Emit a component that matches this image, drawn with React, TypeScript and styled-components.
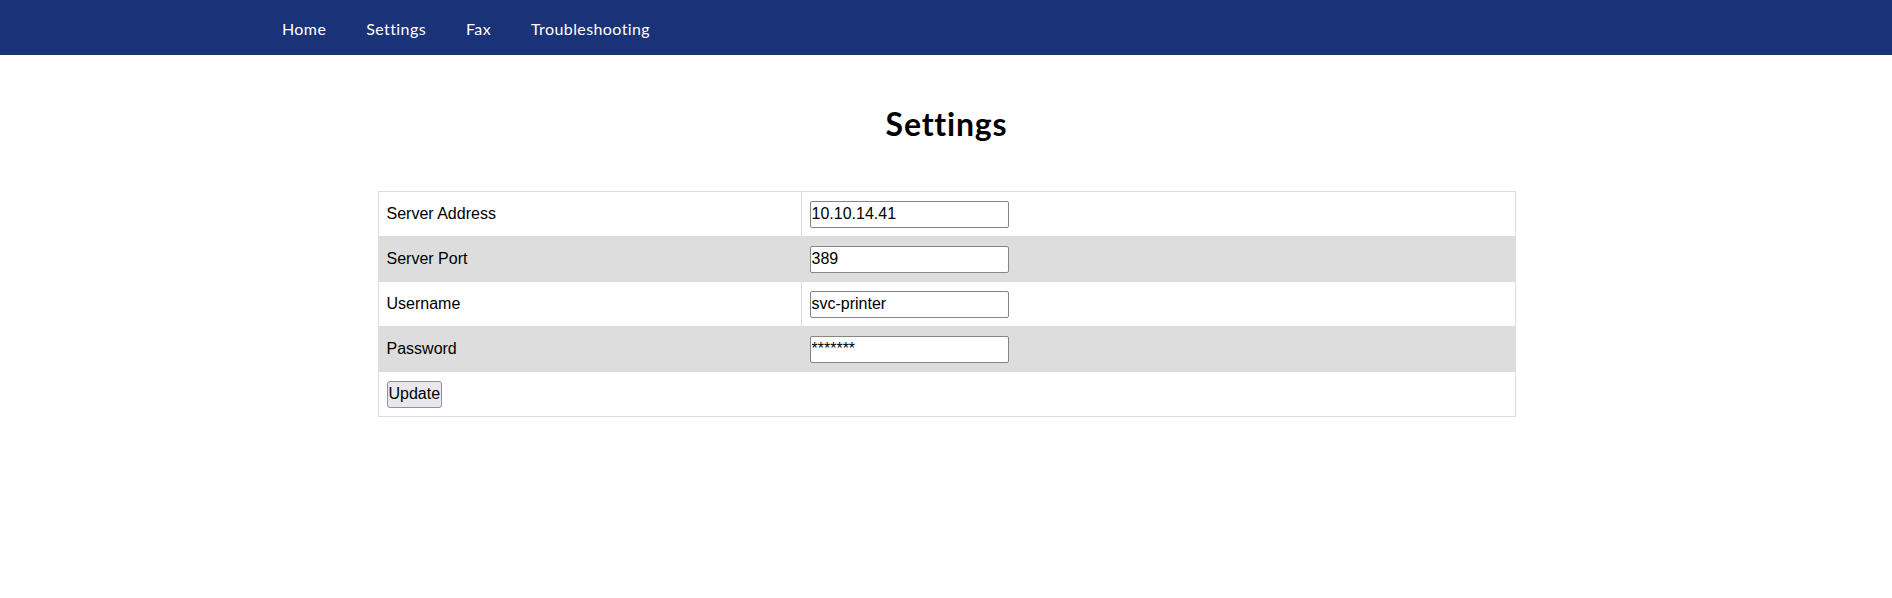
import React from "react";
import styled, { createGlobalStyle } from "styled-components";

const GlobalStyle = createGlobalStyle`
  html, body { margin: 0; padding: 0; background: #ffffff; }
  body { font-family: "Liberation Sans", Arial, sans-serif; }
`;

const NavBar = styled.nav`
  height: 55px;
  background: #193278;
  display: flex;
  align-items: center;
  padding-left: 262px;
`;

const NavLink = styled.a`
  font-family: "Lato", "Noto Sans", sans-serif;
  font-size: 16px;
  letter-spacing: 0.4px;
  color: #ffffff;
  text-decoration: none;
  padding: 0 20px;
  line-height: 20px;
  margin-top: 2px;
`;

const Main = styled.main`
  display: flex;
  flex-direction: column;
  align-items: center;
  padding-left: 1px;
`;

const Title = styled.h1`
  font-family: "Lato", "Noto Sans", sans-serif;
  font-weight: 700;
  font-size: 32px;
  letter-spacing: 0.8px;
  line-height: 40px;
  color: #000;
  margin: 49px 0 47px;
`;

const Table = styled.table`
  width: 1138px;
  border-collapse: collapse;
  border: 1px solid #dddddd;
  font-size: 16px;
  color: #000;
`;

const Row = styled.tr<{ $shaded?: boolean }>`
  background: ${(p) => (p.$shaded ? "#dddddd" : "#ffffff")};
`;

const Cell = styled.td<{ $label?: boolean }>`
  border: 1px solid #dddddd;
  padding: 0 8px;
  height: 44px;
  vertical-align: middle;
  width: ${(p) => (p.$label ? "406px" : "auto")};
`;

const Input = styled.input`
  box-sizing: border-box;
  width: 199px;
  height: 27px;
  font-family: "Liberation Sans", Arial, sans-serif;
  font-size: 16px;
  color: #000;
  padding: 0 1px;
  border: 1px solid #858585;
  border-radius: 2px;
  background: #fff;
  outline: none;
  display: block;
`;

const Button = styled.button`
  box-sizing: border-box;
  height: 27px;
  padding: 0 1px;
  font-family: "Liberation Sans", Arial, sans-serif;
  font-size: 16px;
  color: #000;
  background: #e9e9ed;
  border: 1px solid #8f8f9d;
  border-radius: 3px;
  display: block;
`;

const fields = [
  { label: "Server Address", value: "10.10.14.41" },
  { label: "Server Port", value: "389" },
  { label: "Username", value: "svc-printer" },
  { label: "Password", value: "*******" },
];

export default function App() {
  return (
    <>
      <GlobalStyle />
      <NavBar>
        <NavLink href="#">Home</NavLink>
        <NavLink href="#">Settings</NavLink>
        <NavLink href="#">Fax</NavLink>
        <NavLink href="#">Troubleshooting</NavLink>
      </NavBar>
      <Main>
        <Title>Settings</Title>
        <Table>
          <tbody>
            {fields.map((f, i) => (
              <Row key={f.label} $shaded={i % 2 === 1}>
                <Cell $label>{f.label}</Cell>
                <Cell>
                  <Input type="text" defaultValue={f.value} />
                </Cell>
              </Row>
            ))}
            <Row>
              <Cell colSpan={2}>
                <Button type="button">Update</Button>
              </Cell>
            </Row>
          </tbody>
        </Table>
      </Main>
    </>
  );
}
